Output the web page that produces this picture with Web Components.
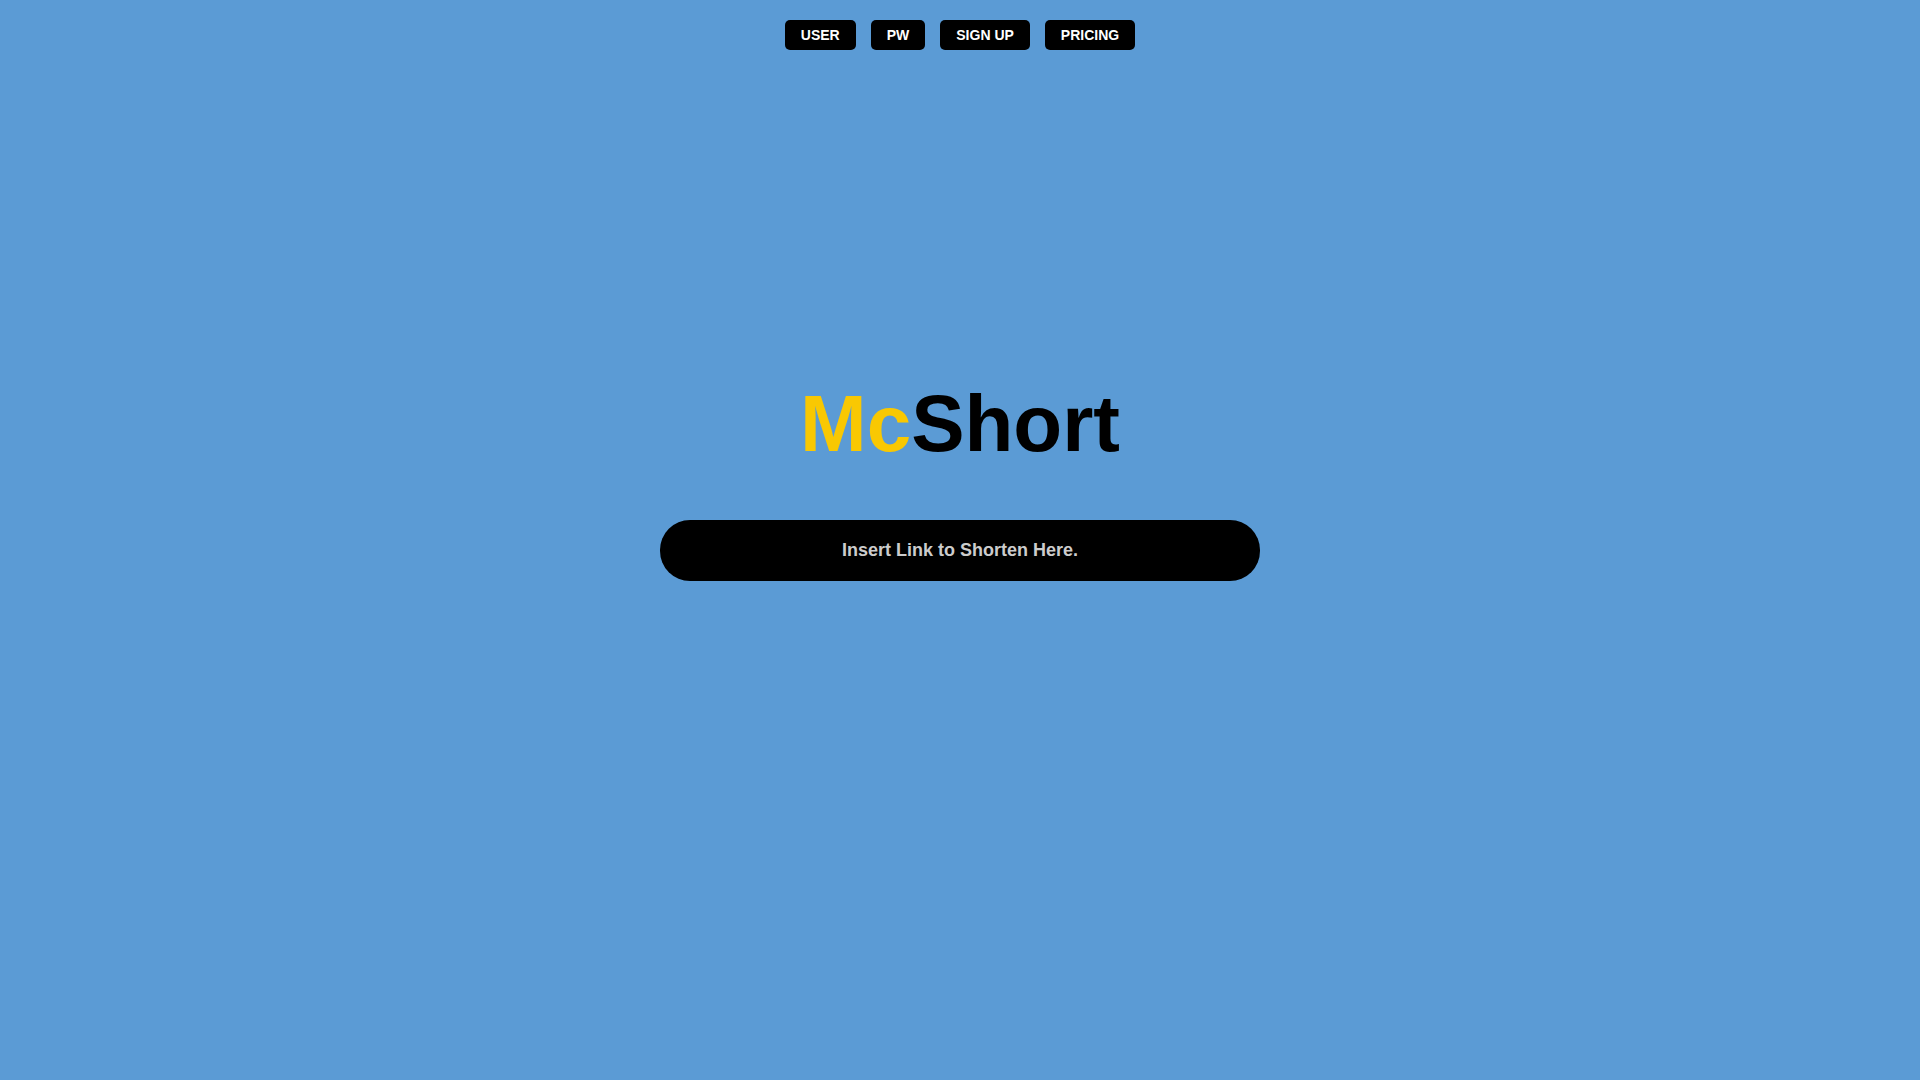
<!DOCTYPE html>
<html lang="en">
<head>
<meta charset="utf-8">
<meta name="viewport" content="width=device-width, initial-scale=1">
<title>McShort</title>
<style>
body {
  margin: 0;
  background: #5b9bd5;
  font-family: "Liberation Sans", Arial, sans-serif;
}
</style>
</head>
<body>

<mc-page>
  <mc-nav slot="nav">
    <mc-nav-button>USER</mc-nav-button>
    <mc-nav-button>PW</mc-nav-button>
    <mc-nav-button>SIGN UP</mc-nav-button>
    <mc-nav-button>PRICING</mc-nav-button>
  </mc-nav>
  <mc-logo><span slot="accent">Mc</span>Short</mc-logo>
  <mc-link-input placeholder="Insert Link to Shorten Here."></mc-link-input>
</mc-page>

<script>
/**
 * Full height page, with a [slot="nav"] on top and everything else centered below it.
 */
class McPageElement extends HTMLElement {
  constructor() {
    super();

    const root = this.attachShadow({mode: 'open'});
    root.innerHTML = `
<style>

:host {
  display: flex;
  flex-direction: column;
  min-height: 100vh;
}

header {
  padding: 20px;
}

/* extra bottom padding keeps the contents above the middle */
main {
  flex: 1;
  display: flex;
  flex-direction: column;
  align-items: center;
  justify-content: center;
  gap: 50px;
  padding: 0 20px 192px;
}

</style>
<header><slot name="nav"></slot></header>
<main><slot></slot></main>
    `;
  }
}

customElements.define('mc-page', McPageElement);


class McNavElement extends HTMLElement {
  constructor() {
    super();

    const root = this.attachShadow({mode: 'open'});
    root.innerHTML = `
<style>

:host {
  display: block;
}

nav {
  display: flex;
  flex-wrap: wrap;
  justify-content: center;
  gap: 15px;
}

</style>
<nav><slot></slot></nav>
    `;
  }
}

customElements.define('mc-nav', McNavElement);


class McNavButtonElement extends HTMLElement {
  constructor() {
    super();

    const root = this.attachShadow({mode: 'open'});
    root.innerHTML = `
<style>

:host {
  display: block;
}

button {
  display: block;
  padding: 7px 16px;
  border: 0;
  border-radius: 5px;
  background: #000;
  color: #fff;
  font-family: inherit;
  font-size: 14px;
  font-weight: bold;
  line-height: 16px;
  cursor: pointer;
}
button:hover {
  background: #333;
}

</style>
<button type="button"><slot></slot></button>
    `;
  }
}

customElements.define('mc-nav-button', McNavButtonElement);


/**
 * The wordmark. Put the colored part in [slot="accent"].
 */
class McLogoElement extends HTMLElement {
  constructor() {
    super();

    const root = this.attachShadow({mode: 'open'});
    root.innerHTML = `
<style>

:host {
  display: block;
}

h1 {
  margin: 0;
  color: #000;
  font-size: 80px;
  font-weight: bold;
  line-height: 92px;
}

::slotted([slot="accent"]) {
  color: #f9c802;
}

</style>
<h1><slot name="accent"></slot><slot></slot></h1>
    `;
  }
}

customElements.define('mc-logo', McLogoElement);


/**
 * Text box for the link, supports [placeholder].
 */
class McLinkInputElement extends HTMLElement {
  static get observedAttributes() { return ['placeholder']; }

  constructor() {
    super();

    const root = this.attachShadow({mode: 'open'});
    root.innerHTML = `
<style>

:host {
  display: block;
  width: 100%;
  max-width: 600px;
}

input {
  display: block;
  box-sizing: border-box;
  width: 100%;
  padding: 20px 30px;
  border: 0;
  border-radius: 30px;
  outline: 0;
  background: #000;
  color: #fff;
  font-family: inherit;
  font-size: 18px;
  font-weight: bold;
  line-height: 21px;
  text-align: center;
}
input::placeholder {
  color: #ccc;
}

</style>
<input type="url" id="link">
    `;

    this.input_ = root.querySelector('input');
  }

  attributeChangedCallback(name, previous, value) {
    this.input_.placeholder = value || '';
    this.input_.setAttribute('aria-label', value || '');
  }
}

customElements.define('mc-link-input', McLinkInputElement);
</script>
</body>
</html>
